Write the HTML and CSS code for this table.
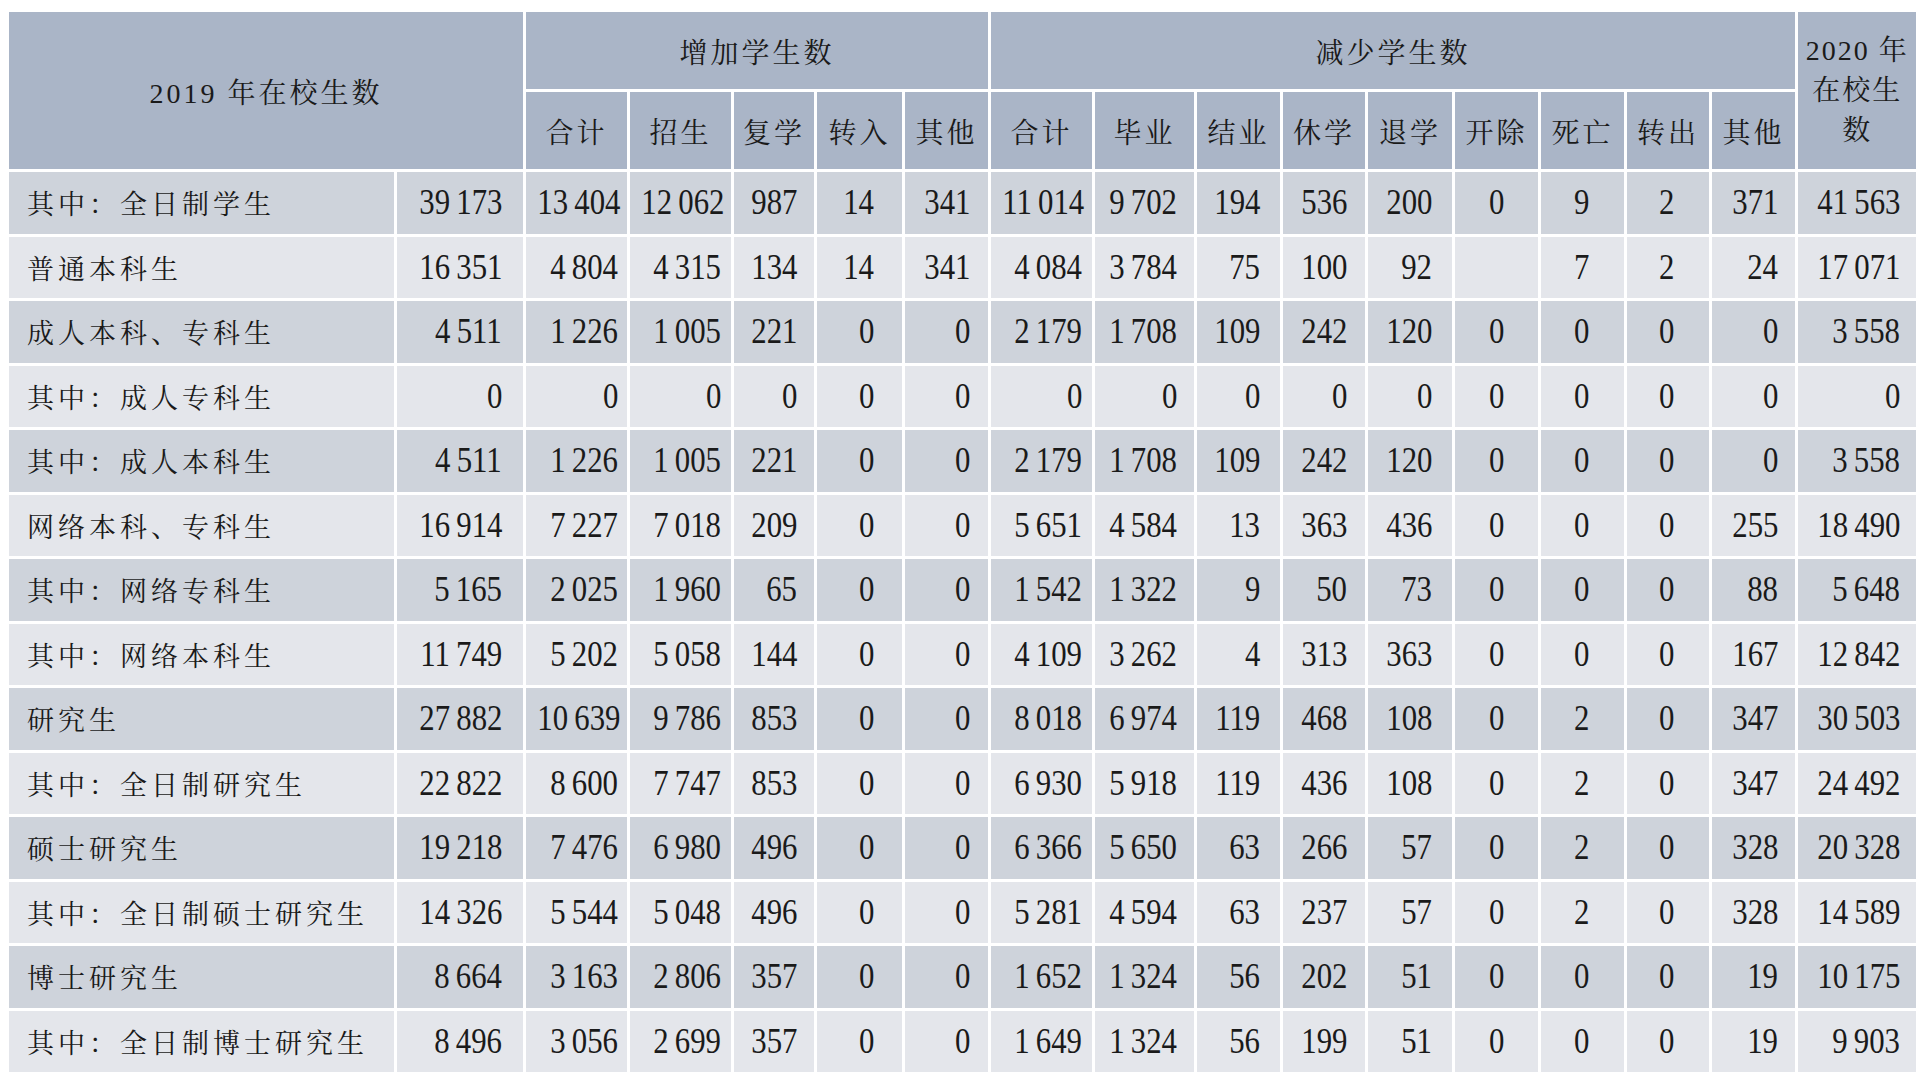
FILE: index.html
```html
<!DOCTYPE html>
<html lang="zh-CN">
<head>
<meta charset="utf-8">
<title>在校生数变动情况</title>
<link rel="stylesheet" href="styles.css">
</head>
<body>
<table class="stats">
  <colgroup>
    <col class="c-label"><col class="c-2019">
    <col class="c-w101"><col class="c-w101"><col class="c-w80"><col class="c-w85"><col class="c-w83">
    <col class="c-w101"><col class="c-w99"><col class="c-w83"><col class="c-w82"><col class="c-w84">
    <col class="c-w83"><col class="c-w83"><col class="c-w82"><col class="c-w83"><col class="c-2020">
  </colgroup>
  <thead>
    <tr class="h1">
      <th colspan="2" rowspan="2">2019 年在校生数</th>
      <th colspan="5">增加学生数</th>
      <th colspan="9">减少学生数</th>
      <th rowspan="2" class="h2020">2020 年<br>在校生<br>数</th>
    </tr>
    <tr class="h2">
      <th>合计</th><th>招生</th><th>复学</th><th>转入</th><th>其他</th>
      <th>合计</th><th>毕业</th><th>结业</th><th>休学</th><th>退学</th><th>开除</th><th>死亡</th><th>转出</th><th>其他</th>
    </tr>
  </thead>
  <tbody>
    <tr class="dark"><td>其中：全日制学生</td><td><span>39&#8201;173</span></td><td><span>13&#8201;404</span></td><td><span>12&#8201;062</span></td><td><span>987</span></td><td><span>14</span></td><td><span>341</span></td><td><span>11&#8201;014</span></td><td><span>9&#8201;702</span></td><td><span>194</span></td><td><span>536</span></td><td><span>200</span></td><td><span>0</span></td><td><span>9</span></td><td><span>2</span></td><td><span>371</span></td><td><span>41&#8201;563</span></td></tr>
    <tr class="light"><td>普通本科生</td><td><span>16&#8201;351</span></td><td><span>4&#8201;804</span></td><td><span>4&#8201;315</span></td><td><span>134</span></td><td><span>14</span></td><td><span>341</span></td><td><span>4&#8201;084</span></td><td><span>3&#8201;784</span></td><td><span>75</span></td><td><span>100</span></td><td><span>92</span></td><td></td><td><span>7</span></td><td><span>2</span></td><td><span>24</span></td><td><span>17&#8201;071</span></td></tr>
    <tr class="dark"><td>成人本科、专科生</td><td><span>4&#8201;511</span></td><td><span>1&#8201;226</span></td><td><span>1&#8201;005</span></td><td><span>221</span></td><td><span>0</span></td><td><span>0</span></td><td><span>2&#8201;179</span></td><td><span>1&#8201;708</span></td><td><span>109</span></td><td><span>242</span></td><td><span>120</span></td><td><span>0</span></td><td><span>0</span></td><td><span>0</span></td><td><span>0</span></td><td><span>3&#8201;558</span></td></tr>
    <tr class="light"><td>其中：成人专科生</td><td><span>0</span></td><td><span>0</span></td><td><span>0</span></td><td><span>0</span></td><td><span>0</span></td><td><span>0</span></td><td><span>0</span></td><td><span>0</span></td><td><span>0</span></td><td><span>0</span></td><td><span>0</span></td><td><span>0</span></td><td><span>0</span></td><td><span>0</span></td><td><span>0</span></td><td><span>0</span></td></tr>
    <tr class="dark"><td>其中：成人本科生</td><td><span>4&#8201;511</span></td><td><span>1&#8201;226</span></td><td><span>1&#8201;005</span></td><td><span>221</span></td><td><span>0</span></td><td><span>0</span></td><td><span>2&#8201;179</span></td><td><span>1&#8201;708</span></td><td><span>109</span></td><td><span>242</span></td><td><span>120</span></td><td><span>0</span></td><td><span>0</span></td><td><span>0</span></td><td><span>0</span></td><td><span>3&#8201;558</span></td></tr>
    <tr class="light"><td>网络本科、专科生</td><td><span>16&#8201;914</span></td><td><span>7&#8201;227</span></td><td><span>7&#8201;018</span></td><td><span>209</span></td><td><span>0</span></td><td><span>0</span></td><td><span>5&#8201;651</span></td><td><span>4&#8201;584</span></td><td><span>13</span></td><td><span>363</span></td><td><span>436</span></td><td><span>0</span></td><td><span>0</span></td><td><span>0</span></td><td><span>255</span></td><td><span>18&#8201;490</span></td></tr>
    <tr class="dark"><td>其中：网络专科生</td><td><span>5&#8201;165</span></td><td><span>2&#8201;025</span></td><td><span>1&#8201;960</span></td><td><span>65</span></td><td><span>0</span></td><td><span>0</span></td><td><span>1&#8201;542</span></td><td><span>1&#8201;322</span></td><td><span>9</span></td><td><span>50</span></td><td><span>73</span></td><td><span>0</span></td><td><span>0</span></td><td><span>0</span></td><td><span>88</span></td><td><span>5&#8201;648</span></td></tr>
    <tr class="light"><td>其中：网络本科生</td><td><span>11&#8201;749</span></td><td><span>5&#8201;202</span></td><td><span>5&#8201;058</span></td><td><span>144</span></td><td><span>0</span></td><td><span>0</span></td><td><span>4&#8201;109</span></td><td><span>3&#8201;262</span></td><td><span>4</span></td><td><span>313</span></td><td><span>363</span></td><td><span>0</span></td><td><span>0</span></td><td><span>0</span></td><td><span>167</span></td><td><span>12&#8201;842</span></td></tr>
    <tr class="dark"><td>研究生</td><td><span>27&#8201;882</span></td><td><span>10&#8201;639</span></td><td><span>9&#8201;786</span></td><td><span>853</span></td><td><span>0</span></td><td><span>0</span></td><td><span>8&#8201;018</span></td><td><span>6&#8201;974</span></td><td><span>119</span></td><td><span>468</span></td><td><span>108</span></td><td><span>0</span></td><td><span>2</span></td><td><span>0</span></td><td><span>347</span></td><td><span>30&#8201;503</span></td></tr>
    <tr class="light"><td>其中：全日制研究生</td><td><span>22&#8201;822</span></td><td><span>8&#8201;600</span></td><td><span>7&#8201;747</span></td><td><span>853</span></td><td><span>0</span></td><td><span>0</span></td><td><span>6&#8201;930</span></td><td><span>5&#8201;918</span></td><td><span>119</span></td><td><span>436</span></td><td><span>108</span></td><td><span>0</span></td><td><span>2</span></td><td><span>0</span></td><td><span>347</span></td><td><span>24&#8201;492</span></td></tr>
    <tr class="dark"><td>硕士研究生</td><td><span>19&#8201;218</span></td><td><span>7&#8201;476</span></td><td><span>6&#8201;980</span></td><td><span>496</span></td><td><span>0</span></td><td><span>0</span></td><td><span>6&#8201;366</span></td><td><span>5&#8201;650</span></td><td><span>63</span></td><td><span>266</span></td><td><span>57</span></td><td><span>0</span></td><td><span>2</span></td><td><span>0</span></td><td><span>328</span></td><td><span>20&#8201;328</span></td></tr>
    <tr class="light"><td>其中：全日制硕士研究生</td><td><span>14&#8201;326</span></td><td><span>5&#8201;544</span></td><td><span>5&#8201;048</span></td><td><span>496</span></td><td><span>0</span></td><td><span>0</span></td><td><span>5&#8201;281</span></td><td><span>4&#8201;594</span></td><td><span>63</span></td><td><span>237</span></td><td><span>57</span></td><td><span>0</span></td><td><span>2</span></td><td><span>0</span></td><td><span>328</span></td><td><span>14&#8201;589</span></td></tr>
    <tr class="dark"><td>博士研究生</td><td><span>8&#8201;664</span></td><td><span>3&#8201;163</span></td><td><span>2&#8201;806</span></td><td><span>357</span></td><td><span>0</span></td><td><span>0</span></td><td><span>1&#8201;652</span></td><td><span>1&#8201;324</span></td><td><span>56</span></td><td><span>202</span></td><td><span>51</span></td><td><span>0</span></td><td><span>0</span></td><td><span>0</span></td><td><span>19</span></td><td><span>10&#8201;175</span></td></tr>
    <tr class="light"><td>其中：全日制博士研究生</td><td><span>8&#8201;496</span></td><td><span>3&#8201;056</span></td><td><span>2&#8201;699</span></td><td><span>357</span></td><td><span>0</span></td><td><span>0</span></td><td><span>1&#8201;649</span></td><td><span>1&#8201;324</span></td><td><span>56</span></td><td><span>199</span></td><td><span>51</span></td><td><span>0</span></td><td><span>0</span></td><td><span>0</span></td><td><span>19</span></td><td><span>9&#8201;903</span></td></tr>
  </tbody>
</table>
</body>
</html>
```
FILE: styles.css
```css
html, body {
  margin: 0;
  padding: 0;
  background: #ffffff;
}

body {
  padding: 9px 0 0 6px;
  font-family: "Liberation Serif", "Noto Serif CJK SC", "Noto Sans CJK SC", serif;
  color: #1a1a1a;
}

.stats {
  border-collapse: separate;
  border-spacing: 3px;
  table-layout: fixed;
  width: 1913px;
}

.c-label { width: 385px; }
.c-2019 { width: 126px; }
.c-w101 { width: 101px; }
.c-w80 { width: 80px; }
.c-w85 { width: 85px; }
.c-w83 { width: 83px; }
.c-w99 { width: 99px; }
.c-w82 { width: 82px; }
.c-w84 { width: 84px; }
.c-2020 { width: 118px; }

.stats th {
  background: #aab5c7;
  font-weight: normal;
  font-size: 28px;
  letter-spacing: 3px;
  text-align: center;
  vertical-align: middle;
  padding: 0;
  white-space: nowrap;
}

.stats tr.h1 th,
.stats tr.h2 th {
  height: 77px;
}

.stats th.h2020 {
  line-height: 40px;
  letter-spacing: 2px;
}

.stats td {
  height: 61.5px;
  padding: 0;
  vertical-align: middle;
  text-align: right;
  white-space: nowrap;
}

.stats tr.dark td { background: #ced3db; }
.stats tr.light td { background: #e4e6eb; }

.stats td:first-child {
  text-align: left;
  padding-left: 18px;
  font-size: 27px;
  letter-spacing: 4px;
}

.stats td span {
  display: inline-block;
  font-size: 35px;
  transform: scaleX(0.88);
  transform-origin: right center;
  line-height: 1;
}

.stats td:nth-child(2) { padding-right: 21px; }
.stats td:nth-child(3) { padding-right: 9px; }
.stats td:nth-child(4) { padding-right: 10px; }
.stats td:nth-child(5) { padding-right: 17px; }
.stats td:nth-child(6) { padding-right: 28px; }
.stats td:nth-child(7) { padding-right: 18px; }
.stats td:nth-child(8) { padding-right: 10px; }
.stats td:nth-child(9) { padding-right: 17px; }
.stats td:nth-child(10) { padding-right: 20px; }
.stats td:nth-child(11) { padding-right: 18px; }
.stats td:nth-child(12) { padding-right: 20px; }
.stats td:nth-child(13) { padding-right: 34px; }
.stats td:nth-child(14) { padding-right: 35px; }
.stats td:nth-child(15) { padding-right: 35px; }
.stats td:nth-child(16) { padding-right: 17px; }
.stats td:nth-child(17) { padding-right: 16px; }
```
